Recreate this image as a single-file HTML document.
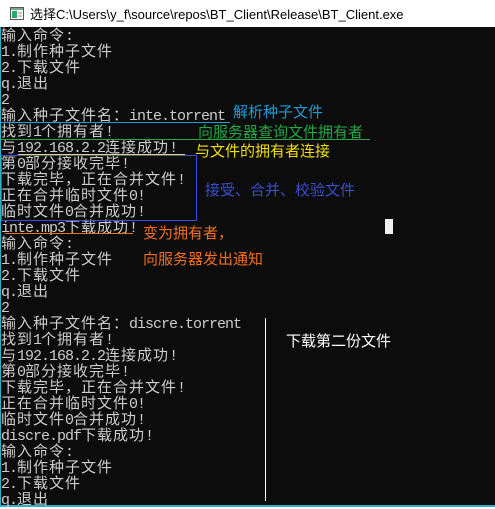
<!DOCTYPE html>
<html><head><meta charset="utf-8"><style>
body{margin:0;width:495px;height:509px;overflow:hidden;background:#fff;position:relative;font-family:"Liberation Sans","Noto Sans CJK SC",sans-serif}
#title{position:absolute;left:0;top:0;width:495px;height:27px;background:#fff}
#title span{position:absolute;left:30px;top:4px;font-size:13px;color:#000;white-space:nowrap}
#con{position:absolute;left:0;top:27px;width:495px;height:480px;background:#0c0c0c;border-left:1px solid #2ab0c8;border-bottom:2px solid #2ab0c8;box-sizing:border-box}
.l{position:absolute;left:1px;top:27px;color:#cccccc;font-family:"Noto Sans CJK SC",monospace;font-size:15px;letter-spacing:1px}
.l div{height:16px;line-height:16px;white-space:pre;overflow:visible}
.l i{font-style:normal;font-family:"Liberation Mono",monospace;font-size:15px;letter-spacing:-1px;line-height:16px}
.a{position:absolute;font-family:"Noto Sans CJK SC",sans-serif;font-size:15px;line-height:16px;white-space:nowrap}
.h{position:absolute;height:1px}
</style></head><body>
<div id="title">
<svg style="position:absolute;left:10px;top:7px" width="14" height="13"><rect x="0.5" y="0.5" width="13" height="12" fill="#fff" stroke="#555"/><rect x="1" y="1" width="12" height="2" fill="#7a8"/><rect x="2" y="4" width="5" height="7" fill="#2a6"/><line x1="8" y1="6" x2="12" y2="6" stroke="#888"/><line x1="8" y1="9" x2="12" y2="9" stroke="#888"/></svg>
<span>选择C:\Users\y_f\source\repos\BT_Client\Release\BT_Client.exe</span></div>
<div id="con"></div>
<div class="l">
<div>输入命令<i>:</i></div>
<div><i>1.</i>制作种子文件</div>
<div><i>2.</i>下载文件</div>
<div><i>q.</i>退出</div>
<div><i>2</i></div>
<div>输入种子文件名：<i>inte.torrent</i></div>
<div>找到<i>1</i>个拥有者<i>!</i></div>
<div>与<i>192.168.2.2</i>连接成功<i>!</i></div>
<div>第<i>0</i>部分接收完毕<i>!</i></div>
<div>下载完毕，正在合并文件<i>!</i></div>
<div>正在合并临时文件<i>0!</i></div>
<div>临时文件<i>0</i>合并成功<i>!</i></div>
<div><i>inte.mp3</i>下载成功<i>!</i></div>
<div>输入命令<i>:</i></div>
<div><i>1.</i>制作种子文件</div>
<div><i>2.</i>下载文件</div>
<div><i>q.</i>退出</div>
<div><i>2</i></div>
<div>输入种子文件名：<i>discre.torrent</i></div>
<div>找到<i>1</i>个拥有者<i>!</i></div>
<div>与<i>192.168.2.2</i>连接成功<i>!</i></div>
<div>第<i>0</i>部分接收完毕<i>!</i></div>
<div>下载完毕，正在合并文件<i>!</i></div>
<div>正在合并临时文件<i>0!</i></div>
<div>临时文件<i>0</i>合并成功<i>!</i></div>
<div><i>discre.pdf</i>下载成功<i>!</i></div>
<div>输入命令<i>:</i></div>
<div><i>1.</i>制作种子文件</div>
<div><i>2.</i>下载文件</div>
<div><i>q.</i>退出</div>
</div>
<div class="h" style="left:0;top:122px;width:230px;background:#1e9bd7"></div>
<div class="a" style="left:233px;top:104px;color:#1e9bd7">解析种子文件</div>
<div class="h" style="left:0;top:139px;width:370px;background:#22a844"></div>
<div class="a" style="left:198px;top:124px;color:#22a844">向服务器查询文件拥有者</div>
<div class="h" style="left:18px;top:154px;width:167px;background:#f0e000"></div>
<div class="a" style="left:195px;top:143px;color:#f0e000">与文件的拥有者连接</div>
<div style="position:absolute;left:1px;top:155px;width:196px;height:66px;border:1px solid #3a4fe0;box-sizing:border-box"></div>
<div class="a" style="left:205px;top:182px;color:#3b4fc8">接受、合并、校验文件</div>
<div class="h" style="left:5px;top:233px;width:128px;background:#f07020"></div>
<div class="a" style="left:143px;top:225px;color:#f07020">变为拥有者，</div>
<div class="a" style="left:143px;top:251px;color:#f07020">向服务器发出通知</div>
<div style="position:absolute;left:385px;top:219px;width:8px;height:15px;background:#f0f0f0"></div>
<div style="position:absolute;left:265px;top:318px;width:1px;height:183px;background:#fff"></div>
<div class="a" style="left:286px;top:333px;color:#fff">下载第二份文件</div>
</body></html>
